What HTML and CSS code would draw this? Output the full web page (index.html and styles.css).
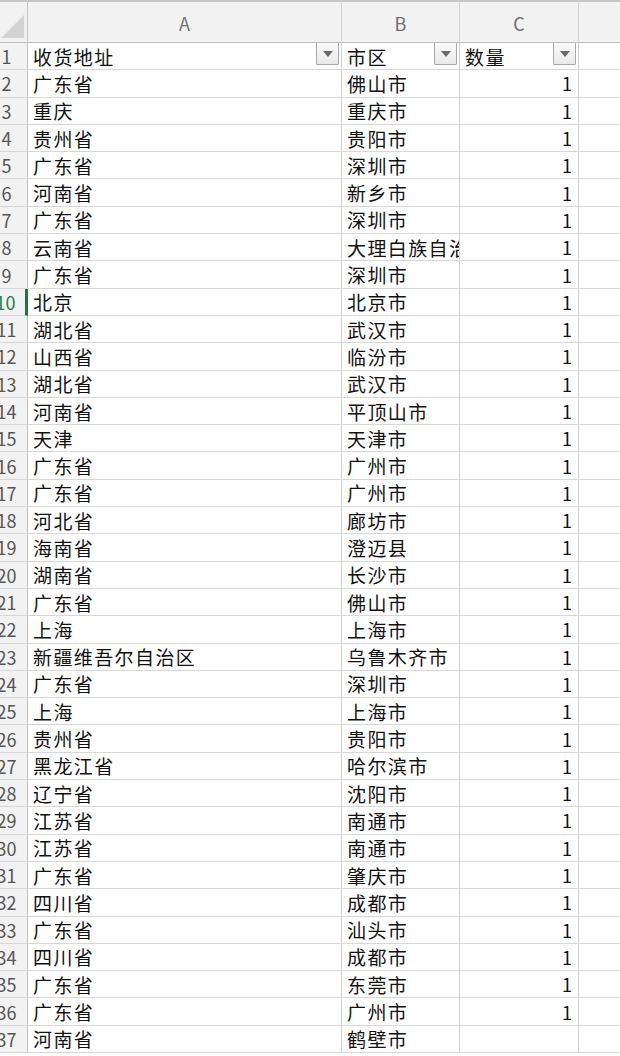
FILE: index.html
```html
<!DOCTYPE html>
<html lang="zh-CN">
<head>
<meta charset="utf-8">
<title>Sheet</title>
<link rel="stylesheet" href="styles.css">
</head>
<body>
<div class="sheet">
  <div class="corner"><span class="tri"></span></div>
  <div class="ch">A</div><div class="ch">B</div><div class="ch">C</div><div class="ch last"></div>

  <div class="rh"><span>1</span></div>
  <div class="c hd"><span class="t">收货地址</span><span class="fb"><i></i></span></div>
  <div class="c hd"><span class="t">市区</span><span class="fb"><i></i></span></div>
  <div class="c hd"><span class="t">数量</span><span class="fb"><i></i></span></div>
  <div class="c e"></div>

  <div class="rh"><span>2</span></div><div class="c">广东省</div><div class="c">佛山市</div><div class="c n">1</div><div class="c e"></div>
  <div class="rh"><span>3</span></div><div class="c">重庆</div><div class="c">重庆市</div><div class="c n">1</div><div class="c e"></div>
  <div class="rh"><span>4</span></div><div class="c">贵州省</div><div class="c">贵阳市</div><div class="c n">1</div><div class="c e"></div>
  <div class="rh"><span>5</span></div><div class="c">广东省</div><div class="c">深圳市</div><div class="c n">1</div><div class="c e"></div>
  <div class="rh"><span>6</span></div><div class="c">河南省</div><div class="c">新乡市</div><div class="c n">1</div><div class="c e"></div>
  <div class="rh"><span>7</span></div><div class="c">广东省</div><div class="c">深圳市</div><div class="c n">1</div><div class="c e"></div>
  <div class="rh"><span>8</span></div><div class="c">云南省</div><div class="c">大理白族自治州</div><div class="c n">1</div><div class="c e"></div>
  <div class="rh"><span>9</span></div><div class="c">广东省</div><div class="c">深圳市</div><div class="c n">1</div><div class="c e"></div>
  <div class="rh active"><span>10</span></div><div class="c">北京</div><div class="c">北京市</div><div class="c n">1</div><div class="c e"></div>
  <div class="rh"><span>11</span></div><div class="c">湖北省</div><div class="c">武汉市</div><div class="c n">1</div><div class="c e"></div>
  <div class="rh"><span>12</span></div><div class="c">山西省</div><div class="c">临汾市</div><div class="c n">1</div><div class="c e"></div>
  <div class="rh"><span>13</span></div><div class="c">湖北省</div><div class="c">武汉市</div><div class="c n">1</div><div class="c e"></div>
  <div class="rh"><span>14</span></div><div class="c">河南省</div><div class="c">平顶山市</div><div class="c n">1</div><div class="c e"></div>
  <div class="rh"><span>15</span></div><div class="c">天津</div><div class="c">天津市</div><div class="c n">1</div><div class="c e"></div>
  <div class="rh"><span>16</span></div><div class="c">广东省</div><div class="c">广州市</div><div class="c n">1</div><div class="c e"></div>
  <div class="rh"><span>17</span></div><div class="c">广东省</div><div class="c">广州市</div><div class="c n">1</div><div class="c e"></div>
  <div class="rh"><span>18</span></div><div class="c">河北省</div><div class="c">廊坊市</div><div class="c n">1</div><div class="c e"></div>
  <div class="rh"><span>19</span></div><div class="c">海南省</div><div class="c">澄迈县</div><div class="c n">1</div><div class="c e"></div>
  <div class="rh"><span>20</span></div><div class="c">湖南省</div><div class="c">长沙市</div><div class="c n">1</div><div class="c e"></div>
  <div class="rh"><span>21</span></div><div class="c">广东省</div><div class="c">佛山市</div><div class="c n">1</div><div class="c e"></div>
  <div class="rh"><span>22</span></div><div class="c">上海</div><div class="c">上海市</div><div class="c n">1</div><div class="c e"></div>
  <div class="rh"><span>23</span></div><div class="c">新疆维吾尔自治区</div><div class="c">乌鲁木齐市</div><div class="c n">1</div><div class="c e"></div>
  <div class="rh"><span>24</span></div><div class="c">广东省</div><div class="c">深圳市</div><div class="c n">1</div><div class="c e"></div>
  <div class="rh"><span>25</span></div><div class="c">上海</div><div class="c">上海市</div><div class="c n">1</div><div class="c e"></div>
  <div class="rh"><span>26</span></div><div class="c">贵州省</div><div class="c">贵阳市</div><div class="c n">1</div><div class="c e"></div>
  <div class="rh"><span>27</span></div><div class="c">黑龙江省</div><div class="c">哈尔滨市</div><div class="c n">1</div><div class="c e"></div>
  <div class="rh"><span>28</span></div><div class="c">辽宁省</div><div class="c">沈阳市</div><div class="c n">1</div><div class="c e"></div>
  <div class="rh"><span>29</span></div><div class="c">江苏省</div><div class="c">南通市</div><div class="c n">1</div><div class="c e"></div>
  <div class="rh"><span>30</span></div><div class="c">江苏省</div><div class="c">南通市</div><div class="c n">1</div><div class="c e"></div>
  <div class="rh"><span>31</span></div><div class="c">广东省</div><div class="c">肇庆市</div><div class="c n">1</div><div class="c e"></div>
  <div class="rh"><span>32</span></div><div class="c">四川省</div><div class="c">成都市</div><div class="c n">1</div><div class="c e"></div>
  <div class="rh"><span>33</span></div><div class="c">广东省</div><div class="c">汕头市</div><div class="c n">1</div><div class="c e"></div>
  <div class="rh"><span>34</span></div><div class="c">四川省</div><div class="c">成都市</div><div class="c n">1</div><div class="c e"></div>
  <div class="rh"><span>35</span></div><div class="c">广东省</div><div class="c">东莞市</div><div class="c n">1</div><div class="c e"></div>
  <div class="rh"><span>36</span></div><div class="c">广东省</div><div class="c">广州市</div><div class="c n">1</div><div class="c e"></div>
  <div class="rh"><span>37</span></div><div class="c">河南省</div><div class="c">鹤壁市</div><div class="c n"></div><div class="c e"></div>
</div>
</body>
</html>
```

FILE: styles.css
```css
* { box-sizing: border-box; }
html, body { margin: 0; padding: 0; background: #fff; }
body {
  font-family: "Noto Sans CJK SC", "Noto Sans", sans-serif;
  color: #111;
  overflow: hidden;
}
.sheet {
  display: grid;
  grid-template-columns: 28px 314px 118px 119px 1fr;
  grid-template-rows: 41px;
  grid-auto-rows: 27.3px;
  border-top: 2px solid #c6c6c6;
  width: 620px;
}
.corner {
  background: #f2f2f2;
  border-right: 1px solid #c4c4c4;
  border-bottom: 1px solid #bcbcbc;
  display: flex;
  align-items: flex-end;
  justify-content: flex-end;
  padding: 0 3px 4px 0;
}
.tri {
  width: 0; height: 0;
  border-left: 23px solid transparent;
  border-bottom: 23px solid #d3d3d3;
}
.ch {
  background: #f2f2f2;
  border-right: 1px solid #d2d2d2;
  border-bottom: 1px solid #bcbcbc;
  color: #6e6e6e;
  font-size: 18px;
  display: flex;
  align-items: center;
  justify-content: center;
  padding-top: 2px;
}
.ch.last { border-right: none; }
.rh {
  background: #f2f2f2;
  border-right: 1px solid #c4c4c4;
  border-bottom: 1px solid #d6d6d6;
  color: #555;
  font-size: 18px;
  display: flex;
  align-items: center;
  justify-content: center;
  padding-right: 14px;
  white-space: nowrap;
  overflow: visible;
}
.rh.active {
  color: #2a7a48;
  border-right: 3px solid #217346;
}
.c {
  border-right: 1px solid #d0d0d0;
  border-bottom: 1px solid #d8d8d8;
  font-size: 19px;
  letter-spacing: 1.4px;
  padding: 0 4px 0 5px;
  display: flex;
  align-items: center;
  white-space: nowrap;
  overflow: hidden;
  line-height: 1;
}
.c.n {
  justify-content: flex-end;
  letter-spacing: 0;
  padding-right: 6px;
  font-size: 18px;
}
.c.e { border-right: none; }
.c.hd {
  justify-content: space-between;
  align-items: stretch;
  padding-right: 2px;
}
.c.hd .t { display: flex; align-items: center; }
.fb {
  width: 23px;
  height: 23px;
  margin-top: -1px;
  border: 1px solid #a8a8a8;
  border-radius: 1px;
  background: linear-gradient(#fbfbfb, #e9e9e9);
  display: flex;
  align-items: center;
  justify-content: center;
  flex: none;
}
.fb i {
  width: 0; height: 0;
  border-left: 5px solid transparent;
  border-right: 5px solid transparent;
  border-top: 6px solid #6a6a6a;
}
```
